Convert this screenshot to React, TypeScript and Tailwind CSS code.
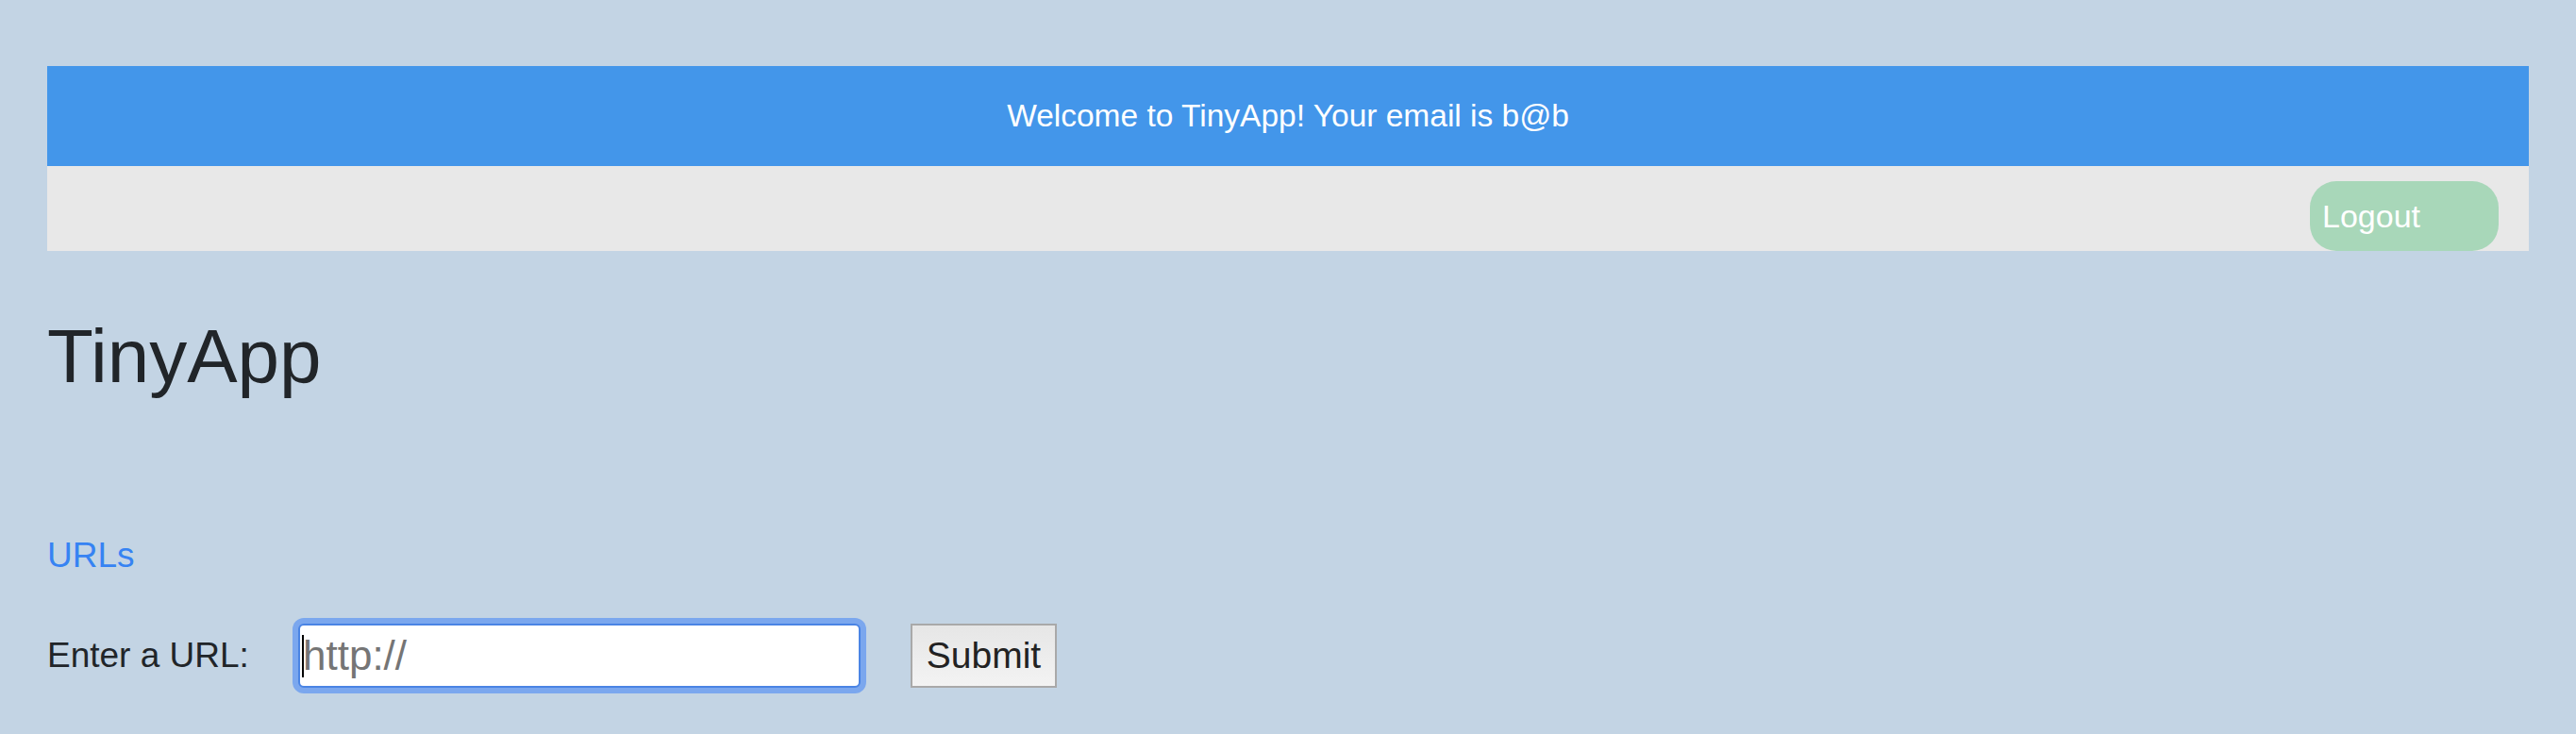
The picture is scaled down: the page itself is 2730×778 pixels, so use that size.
export default function App() {
  return (
    <div className="min-h-screen bg-[#c3d4e4] px-[50px] pt-[70px] font-['Liberation_Sans',Arial,sans-serif] text-[#212529]">
      {/* header */}
      <header>
        <div className="flex h-[106px] items-center justify-center bg-[#4396ea] text-[33.5px] text-white">
          Welcome to TinyApp! Your email is b@b
        </div>
        <nav className="flex h-[90px] items-start justify-end bg-[#e8e8e8] pr-[32px] pt-[16px]">
          <button className="h-[74px] w-[200px] rounded-[28px] bg-[#a8d7b9] pl-[13px] text-left text-[34px] text-white">
            Logout
          </button>
        </nav>
      </header>

      {/* main */}
      <main className="pt-[64px]">
        <h1 className="text-[80px] leading-[96px]">TinyApp</h1>
        <a href="#" className="mt-[135px] block w-fit text-[37px] leading-[56px] text-[#3683f3]">
          URLs
        </a>
        <form className="mt-[44px] flex items-center" onSubmit={(e) => e.preventDefault()}>
          <label className="w-[266px] text-[37px]">Enter a URL:</label>
          <div className="relative">
            <input
              type="text"
              placeholder="http://"
              className="h-[68px] w-[596px] rounded-[6px] border-2 border-[#4a84e4] bg-white pl-[3px] text-[44px] shadow-[0_0_0_6px_#7ba7ee] outline-none placeholder:text-[#757575]"
            />
            <span className="absolute left-[4px] top-[12px] h-[45px] w-[2px] bg-black" />
          </div>
          <button
            type="submit"
            className="ml-[53px] h-[68px] w-[155px] border-2 border-[#a9a9a9] bg-gradient-to-b from-[#e6e6e6] to-[#f3f3f3] text-[39px] text-[#222]"
          >
            Submit
          </button>
        </form>
      </main>
    </div>
  )
}
